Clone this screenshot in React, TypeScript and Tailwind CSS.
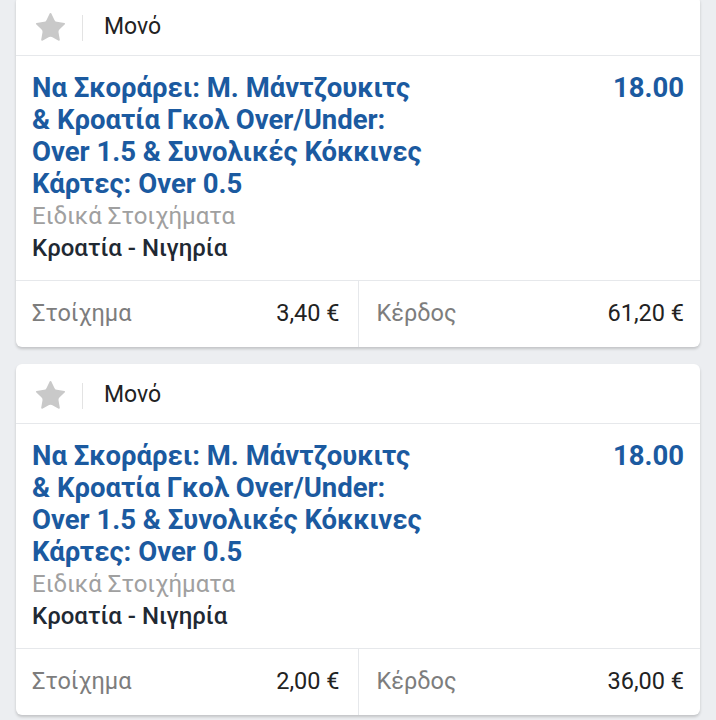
import { Star } from 'lucide-react'

interface BetCardProps {
  stake: string
  payout: string
}

const titleLines = [
  'Να Σκοράρει: Μ. Μάντζουκιτς',
  '& Κροατία Γκολ Over/Under:',
  'Over 1.5 & Συνολικές Κόκκινες',
  'Κάρτες: Over 0.5',
]

function BetCard({ stake, payout }: BetCardProps) {
  return (
    <div className="bg-white rounded-md shadow-[0_2px_3px_rgba(0,0,0,0.18)] overflow-hidden">
      <div className="h-[60px] flex items-end border-b border-[#e6e8eb]">
        <div className="h-[55px] w-full flex items-center">
          <div className="w-[66px] flex justify-center pl-[2px]">
            <Star size={35} strokeWidth={0} className="fill-[#c9c9c9]" />
          </div>
          <div className="w-px h-[26px] bg-[#e3e3e3]" />
          <span className="pl-[21px] text-[23px] text-[#222]">Μονό</span>
        </div>
      </div>

      <div className="flex justify-between pl-4 pr-4 pt-4 pb-4">
        <div>
          <div className="text-[27.5px] leading-[32px] font-bold text-[#1b5aa0]">
            {titleLines.map((l) => (
              <div key={l}>{l}</div>
            ))}
          </div>
          <div className="text-[24px] leading-[32px] text-[#a0a0a0]">Ειδικά Στοιχήματα</div>
          <div className="text-[24px] leading-[32px] font-medium text-[#1f2933]">Κροατία - Νιγηρία</div>
        </div>
        <div className="text-[27.5px] leading-[32px] font-bold text-[#1b5aa0]">18.00</div>
      </div>

      <div className="h-[67px] flex border-t border-[#e6e8eb]">
        <div className="flex-1 flex items-center justify-between pl-4 pr-[18px] border-r border-[#e6e8eb]">
          <span className="text-[23.5px] text-[#7d7d7d]">Στοίχημα</span>
          <span className="text-[23.5px] text-[#222]">{stake}</span>
        </div>
        <div className="flex-1 flex items-center justify-between pl-[18px] pr-4">
          <span className="text-[23.5px] text-[#7d7d7d]">Κέρδος</span>
          <span className="text-[23.5px] text-[#222]">{payout}</span>
        </div>
      </div>
    </div>
  )
}

export default function App() {
  return (
    <div
      className="w-[716px] h-[720px] overflow-hidden bg-[#eceef1] px-4"
      style={{ fontFamily: 'Roboto, "Noto Sans", sans-serif' }}
    >
      <div className="mt-[-4px] flex flex-col gap-[17px]">
        <BetCard stake="3,40 €" payout="61,20 €" />
        <BetCard stake="2,00 €" payout="36,00 €" />
      </div>
    </div>
  )
}
